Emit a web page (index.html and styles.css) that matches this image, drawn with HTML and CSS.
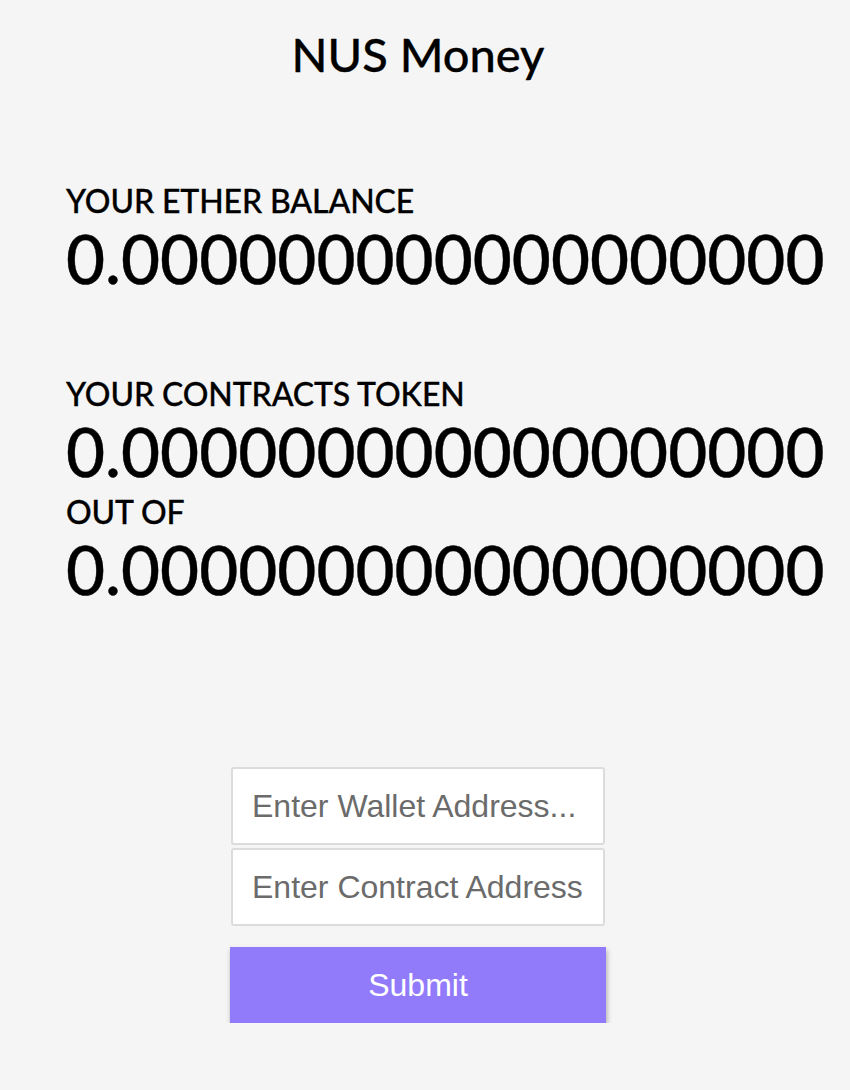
FILE: index.html
```html
<!DOCTYPE html>
<html lang="en">
<head>
<meta charset="utf-8">
<title>NUS Money</title>
<link rel="stylesheet" href="styles.css">
</head>
<body>
<div class="page">
  <h1 class="title">NUS Money</h1>
  <section class="block ether">
    <div class="label">YOUR ETHER BALANCE</div>
    <div class="amount">0.000000000000000000</div>
  </section>
  <section class="block token">
    <div class="label">YOUR CONTRACTS TOKEN</div>
    <div class="amount">0.000000000000000000</div>
    <div class="label label-out">OUT OF</div>
    <div class="amount">0.000000000000000000</div>
  </section>
  <form class="form">
    <input class="field" type="text" placeholder="Enter Wallet Address...">
    <input class="field" type="text" placeholder="Enter Contract Address">
    <button class="submit" type="button">Submit</button>
  </form>
</div>
</body>
</html>
```

FILE: styles.css
```css
html, body {
  margin: 0;
  padding: 0;
  background: #f5f5f5;
}

body {
  font-family: Lato, "Open Sans", sans-serif;
  color: #000;
}

.page {
  width: 836px;
}

.title {
  margin: 26px 0 0;
  font-size: 47px;
  font-weight: 500;
  line-height: 1.2;
  text-align: center;
  -webkit-text-stroke: 0.3px #000;
}

.block {
  padding-left: 66px;
  white-space: nowrap;
}

.ether {
  margin-top: 101px;
}

.token {
  margin-top: 77px;
}

.label {
  font-size: 32px;
  font-weight: 500;
  line-height: 35px;
  letter-spacing: -0.1px;
  -webkit-text-stroke: 0.3px #000;
}

.label-out {
  margin-top: 2px;
}

.amount {
  font-size: 67.4px;
  font-weight: 500;
  line-height: 1.2;
  -webkit-text-stroke: 0.4px #000;
}

.form {
  margin-top: 157px;
  display: flex;
  flex-direction: column;
  align-items: center;
}

.field {
  box-sizing: border-box;
  width: 374px;
  height: 78px;
  margin: 0 0 3px;
  padding: 0 19px;
  border: 2px solid #dcdcdc;
  border-radius: 3px;
  background: #fff;
  font-family: "Liberation Sans", Arial, sans-serif;
  font-size: 32px;
  color: #333;
  outline: none;
}

.field::placeholder {
  color: #6b6b6b;
  opacity: 1;
}

.submit {
  box-sizing: border-box;
  width: 376px;
  height: 76px;
  margin-top: 18px;
  border: none;
  background: #917bfb;
  color: #fff;
  font-family: "Liberation Sans", Arial, sans-serif;
  font-size: 32px;
  box-shadow: 1px 3px 5px rgba(0, 0, 0, 0.3);
  cursor: pointer;
}
```
